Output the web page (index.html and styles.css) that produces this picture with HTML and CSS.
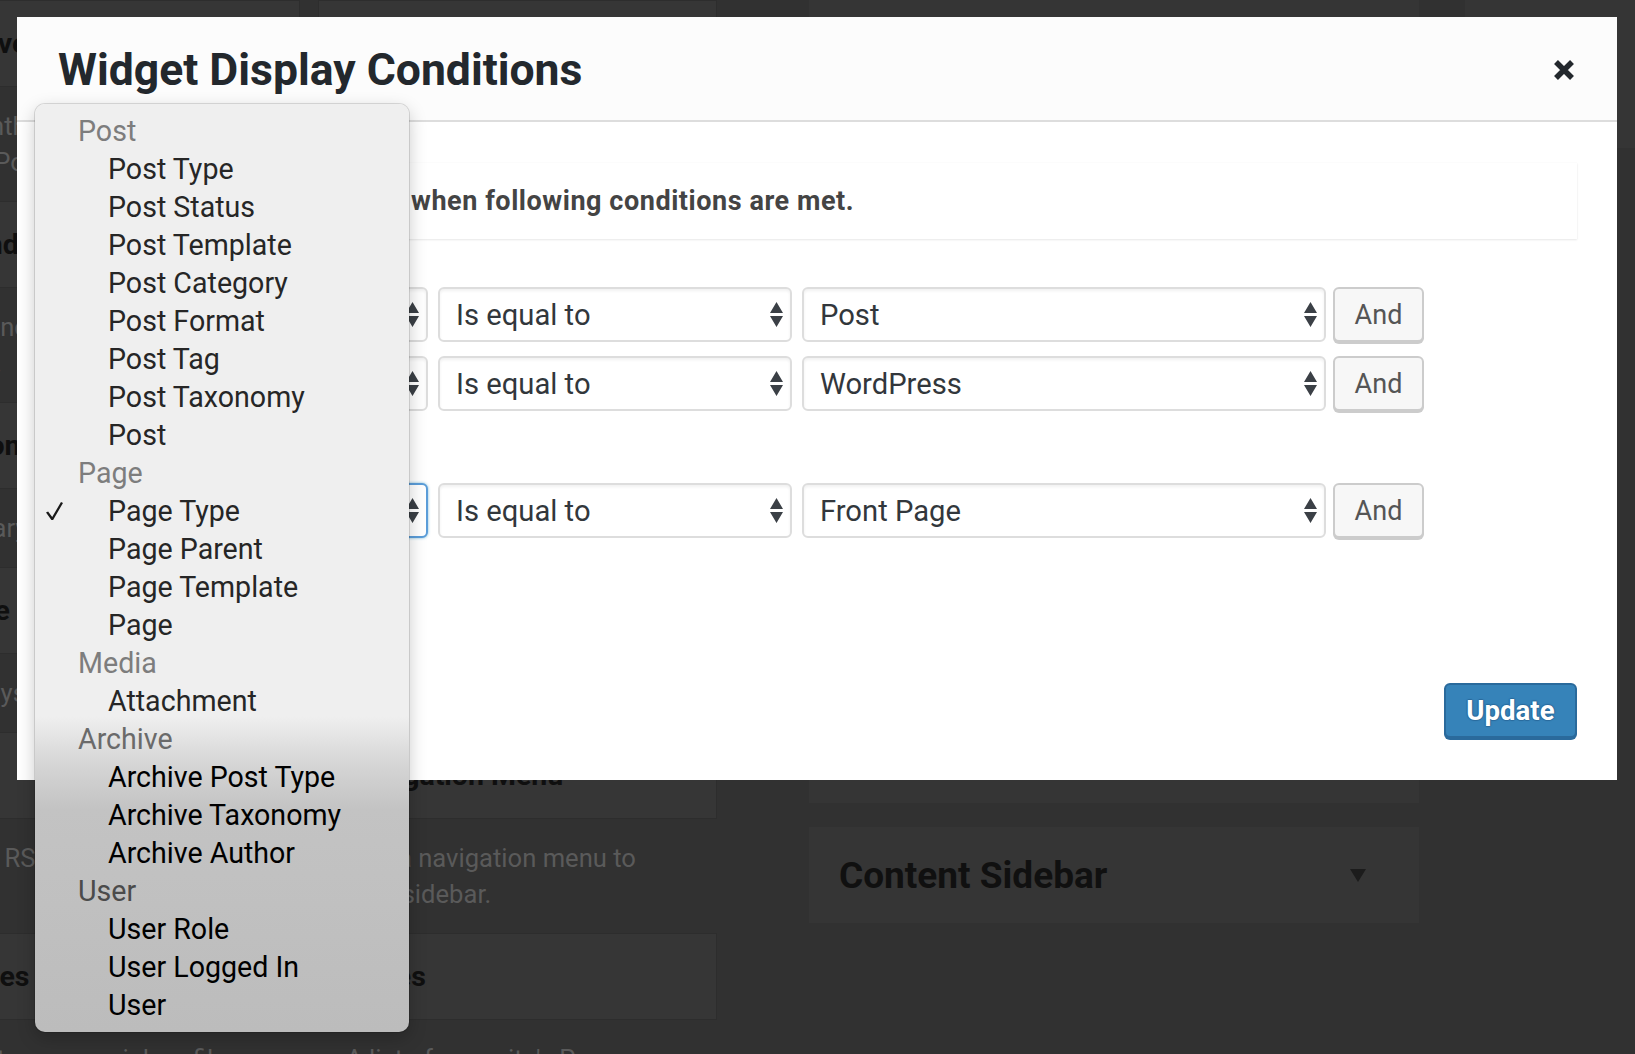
FILE: index.html
```html
<!DOCTYPE html>
<html lang="en">
<head>
<meta charset="utf-8">
<title>Widget Display Conditions</title>
<link rel="stylesheet" href="styles.css">
</head>
<body>
<div class="admin">
  <div class="col col-a">
    <div class="wtop">Archives</div>
    <div class="wdesc">A monthly archive of your<br>site's Posts.</div>
    <div class="wtop">Calendar</div>
    <div class="wdesc">A calendar of your site's<br>Posts.</div>
    <div class="wtop">Custom HTML</div>
    <div class="wdesc">Arbitrary HTML code.</div>
    <div class="wtop">Image</div>
    <div class="wdesc">Displays an image.</div>
    <div class="wtop">Meta</div>
    <div class="wdesc">Login, RSS, &amp; WordPress.org<br>links.</div>
    <div class="wtop">Profiles</div>
    <div class="wdesc">Links to your social profiles.</div>
  </div>
  <div class="col col-b">
    <div class="wtop">Audio</div>
    <div class="wdesc">Displays an audio<br>player.</div>
    <div class="wtop">Categories</div>
    <div class="wdesc">A list or dropdown of<br>categories.</div>
    <div class="wtop">Gallery</div>
    <div class="wdesc">Displays an image gallery.</div>
    <div class="wtop">Media</div>
    <div class="wdesc">Displays a media file.</div>
    <div class="wtop">Navigation Menu</div>
    <div class="wdesc">Add a navigation menu to<br>your sidebar.</div>
    <div class="wtop">Pages</div>
    <div class="wdesc">A list of your site's Pages.</div>
  </div>
  <div class="col col-c">
    <div class="sidebar sidebar-open"></div>
    <div class="sidebar">
      <h2 class="sidebar-name">Content Sidebar</h2>
      <span class="caret"></span>
    </div>
  </div>
  <div class="col col-d">
    <div class="sidebar sidebar-short"></div>
  </div>
</div>

<div class="modal">
  <header class="modal-head">
    <h1 class="modal-title">Widget Display Conditions</h1>
    <button class="close" aria-label="Close">
      <svg viewBox="0 0 22 22" width="22" height="22"><path d="M3 3 19 19M19 3 3 19" stroke="#23282d" stroke-width="5.5" fill="none"/></svg>
    </button>
  </header>
  <div class="modal-body">
    <div class="notice">Display this widget only when following conditions are met.</div>

    <div class="rules">
      <div class="rule">
        <div class="select s1"><span>Post Type</span><svg class="arrows" viewBox="0 0 13 25" width="13" height="25"><path d="M0 11 6.5 0 13 11ZM0 14 13 14 6.5 25Z"/></svg></div>
        <div class="select s2"><span>Is equal to</span><svg class="arrows" viewBox="0 0 13 25" width="13" height="25"><path d="M0 11 6.5 0 13 11ZM0 14 13 14 6.5 25Z"/></svg></div>
        <div class="select s3"><span>Post</span><svg class="arrows" viewBox="0 0 13 25" width="13" height="25"><path d="M0 11 6.5 0 13 11ZM0 14 13 14 6.5 25Z"/></svg></div>
        <button class="btn">And</button>
      </div>
      <div class="rule">
        <div class="select s1"><span>Post Category</span><svg class="arrows" viewBox="0 0 13 25" width="13" height="25"><path d="M0 11 6.5 0 13 11ZM0 14 13 14 6.5 25Z"/></svg></div>
        <div class="select s2"><span>Is equal to</span><svg class="arrows" viewBox="0 0 13 25" width="13" height="25"><path d="M0 11 6.5 0 13 11ZM0 14 13 14 6.5 25Z"/></svg></div>
        <div class="select s3"><span>WordPress</span><svg class="arrows" viewBox="0 0 13 25" width="13" height="25"><path d="M0 11 6.5 0 13 11ZM0 14 13 14 6.5 25Z"/></svg></div>
        <button class="btn">And</button>
      </div>
    </div>

    <div class="or">or</div>

    <div class="rules">
      <div class="rule">
        <div class="select s1 focus"><span>Page Type</span><svg class="arrows" viewBox="0 0 13 25" width="13" height="25"><path d="M0 11 6.5 0 13 11ZM0 14 13 14 6.5 25Z"/></svg></div>
        <div class="select s2"><span>Is equal to</span><svg class="arrows" viewBox="0 0 13 25" width="13" height="25"><path d="M0 11 6.5 0 13 11ZM0 14 13 14 6.5 25Z"/></svg></div>
        <div class="select s3"><span>Front Page</span><svg class="arrows" viewBox="0 0 13 25" width="13" height="25"><path d="M0 11 6.5 0 13 11ZM0 14 13 14 6.5 25Z"/></svg></div>
        <button class="btn">And</button>
      </div>
    </div>

    <div class="actions">
      <button class="btn-primary">Update</button>
    </div>
  </div>
</div>

<div class="menu">
  <div class="opt grp">Post</div>
  <div class="opt"><span class="tick"></span>Post Type</div>
  <div class="opt"><span class="tick"></span>Post Status</div>
  <div class="opt"><span class="tick"></span>Post Template</div>
  <div class="opt"><span class="tick"></span>Post Category</div>
  <div class="opt"><span class="tick"></span>Post Format</div>
  <div class="opt"><span class="tick"></span>Post Tag</div>
  <div class="opt"><span class="tick"></span>Post Taxonomy</div>
  <div class="opt"><span class="tick"></span>Post</div>
  <div class="opt grp">Page</div>
  <div class="opt"><span class="tick"><svg viewBox="0 0 17 18" width="17" height="18"><path d="M0 10.4 2.1 9.4 6.2 15 15 0 17 .9 7.1 18H5.4Z" fill="#1a1a1a"/></svg></span>Page Type</div>
  <div class="opt"><span class="tick"></span>Page Parent</div>
  <div class="opt"><span class="tick"></span>Page Template</div>
  <div class="opt"><span class="tick"></span>Page</div>
  <div class="opt grp">Media</div>
  <div class="opt"><span class="tick"></span>Attachment</div>
  <div class="opt grp mid">Archive</div>
  <div class="opt dk"><span class="tick"></span>Archive Post Type</div>
  <div class="opt dk"><span class="tick"></span>Archive Taxonomy</div>
  <div class="opt dk"><span class="tick"></span>Archive Author</div>
  <div class="opt grp dk">User</div>
  <div class="opt dk"><span class="tick"></span>User Role</div>
  <div class="opt dk"><span class="tick"></span>User Logged In</div>
  <div class="opt dk"><span class="tick"></span>User</div>
</div>
</body>
</html>
```

FILE: styles.css
```css
* { box-sizing: border-box; }
html, body { margin: 0; padding: 0; }
body {
  width: 1635px;
  height: 1054px;
  overflow: hidden;
  position: relative;
  background: #313131;
  font-family: Roboto, "Liberation Sans", Arial, sans-serif;
}

/* ---------- dimmed admin page ---------- */
.admin { display: flex; align-items: flex-start; }
.col { display: flex; flex-direction: column; flex: none; }
.col-a { width: 398px; margin-left: -98px; }
.col-b { width: 399px; margin-left: 18px; }
.col-c { width: 610px; margin-left: 92px; }
.col-d { width: 170px; margin-left: 46px; }

.wtop {
  height: 87px;
  background: #363636;
  border: 1px solid #2d2d2d;
  display: flex;
  align-items: center;
  padding-left: 27px;
  font-size: 28.5px;
  font-weight: 700;
  color: #0f0f0f;
  white-space: nowrap;
  overflow: hidden;
}
.wdesc {
  padding: 21px 0 21px 28px;
  font-size: 25.6px;
  line-height: 36px;
  color: #5a5a5a;
  white-space: nowrap;
}

.sidebar {
  background: #353535;
  display: flex;
  align-items: center;
  justify-content: space-between;
  padding: 0 53px 0 30px;
}
.sidebar-open { height: 803px; }
.sidebar + .sidebar { margin-top: 24px; height: 96px; }
.sidebar-short { height: 148px; }
.sidebar-name { margin: 0; font-size: 37px; font-weight: 700; color: #101010; }
.caret {
  width: 0; height: 0;
  border-left: 8px solid transparent;
  border-right: 8px solid transparent;
  border-top: 13px solid #1c1c1c;
}

/* ---------- modal ---------- */
.modal {
  position: absolute;
  left: 17px;
  top: 17px;
  width: 1600px;
  height: 763px;
  background: #fff;
  display: flex;
  flex-direction: column;
  z-index: 1;
}
.modal-head {
  flex: none;
  height: 105px;
  background: #fcfcfc;
  border-bottom: 2px solid #dddddd;
  display: flex;
  align-items: center;
  justify-content: space-between;
  padding: 2px 42px 0 41px;
}
.modal-title {
  margin: 0;
  font-size: 44.5px;
  font-weight: 700;
  color: #23282d;
}
.close {
  width: 22px;
  height: 22px;
  padding: 0;
  border: 0;
  background: none;
  display: block;
}
.close svg { display: block; }

.modal-body {
  flex: 1;
  display: flex;
  flex-direction: column;
  padding: 41px 40px 42px 40px;
}
.notice {
  height: 76px;
  flex: none;
  display: flex;
  align-items: center;
  white-space: pre;
  padding-left: 43px;
  background: #fff;
  border-left: 4px solid #fff;
  box-shadow: 0 1px 2px rgba(0,0,0,0.09), 0 0 1px rgba(0,0,0,0.06);
  font-size: 27px;
  letter-spacing: 0.55px;
  font-weight: 700;
  color: #444;
}
.rules {
  display: flex;
  flex-direction: column;
  gap: 14px;
}
.notice + .rules { margin-top: 48px; }
.rule { display: flex; align-items: flex-start; }

.select {
  height: 55px;
  border: 2px solid #dddddd;
  border-radius: 6px;
  background: #fff;
  box-shadow: inset 0 2px 3px rgba(0,0,0,0.06);
  display: flex;
  align-items: center;
  justify-content: space-between;
  padding: 0 7px 0 16px;
  font-size: 29.2px;
  color: #32373c;
  white-space: nowrap;
  flex: none;
}
.arrows { fill: #3b4046; flex: none; }
.s1 { width: 371px; }
.s2 { width: 354px; margin-left: 10px; }
.s3 { width: 524px; margin-left: 10px; }
.select.focus {
  border-color: #5b9dd9;
  box-shadow: 0 0 3px rgba(30,140,190,0.6);
}
.btn {
  flex: none;
  width: 91px;
  height: 55px;
  margin-left: 7px;
  border: 2px solid #cccccc;
  border-radius: 6px;
  background: #f7f7f7;
  box-shadow: 0 2px 0 #cccccc;
  font-family: inherit;
  font-size: 27px;
  color: #555;
  padding: 0;
}
.or {
  height: 44px;
  margin: 14px 0;
  display: flex;
  align-items: center;
  padding-left: 20px;
  font-size: 24px;
  color: #72777c;
}
.actions {
  margin-top: auto;
  display: flex;
  justify-content: flex-end;
}
.btn-primary {
  width: 133px;
  height: 55px;
  padding: 0;
  border: 2px solid #2a6a9c;
  border-radius: 6px;
  background: #3683b9;
  box-shadow: 0 2px 0 #2a6a9c;
  color: #fff;
  font-family: inherit;
  font-size: 27.6px;
  font-weight: 700;
  text-shadow: 0 -1px 1px #2a6a9c, 1px 0 1px #2a6a9c, 0 1px 1px #2a6a9c, -1px 0 1px #2a6a9c;
}

/* ---------- native popup menu ---------- */
.menu {
  position: absolute;
  left: 35px;
  top: 104px;
  width: 374px;
  padding: 8px 0;
  border-radius: 10px;
  background: linear-gradient(to bottom, #efefef 0%, #efefef 66%, #d6d6d6 71%, #c3c3c3 76%, #bcbcbc 100%);
  box-shadow: 0 0 0 1px rgba(0,0,0,0.12), 0 6px 18px rgba(0,0,0,0.22);
  font-size: 28.6px;
  color: #262626;
  z-index: 2;
}
.opt {
  height: 38px;
  display: flex;
  align-items: center;
  padding-left: 11px;
  white-space: nowrap;
}
.opt.grp { padding-left: 43px; color: #7d7d7d; }
.opt.grp.mid { color: #6a6a6a; }
.opt.dk { color: #000; }
.opt.grp.dk { color: #4b4b4b; }
.tick { width: 62px; flex: none; display: flex; align-items: center; }
.tick svg { display: block; }
```
